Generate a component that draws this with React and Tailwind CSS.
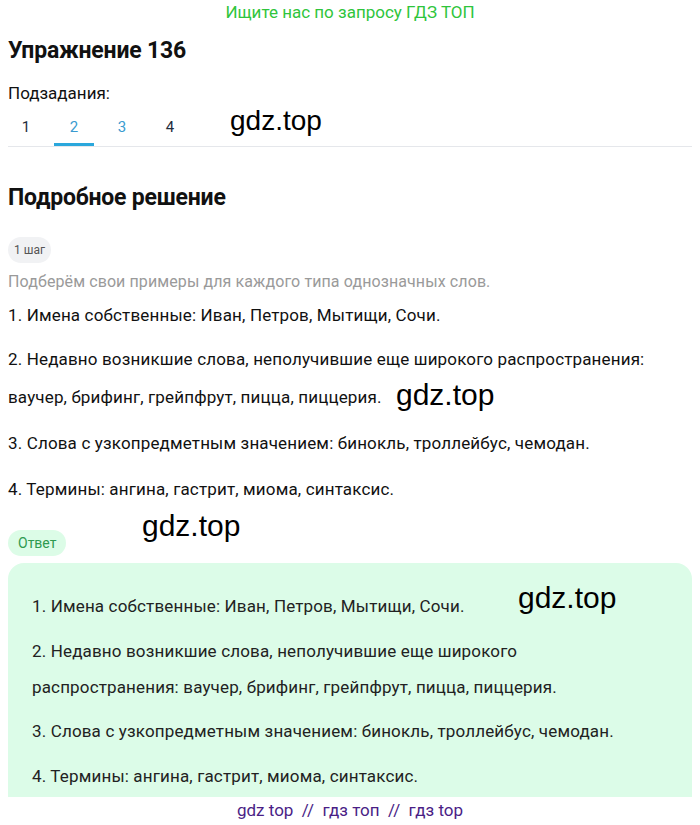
export default function App() {
  const font = { fontFamily: 'Roboto, "Noto Sans", sans-serif' };
  const arial = { fontFamily: '"Liberation Sans", Arial, sans-serif' };
  return (
    <div className="w-[700px] bg-white text-[#111] relative" style={font}>
      <div className="text-center text-[17px] leading-[24px] text-[#2fc53c]">Ищите нас по запросу ГДЗ ТОП</div>
      <div className="px-2">
        <h1 className="text-[23px] font-bold leading-[28px] mt-[13px] tracking-[-0.2px]">Упражнение 136</h1>
        <div className="text-[17px] mt-[17px] leading-[22px]">Подзадания:</div>
        <div className="relative flex border-b border-[#e5e7eb] mt-[4px]">
          {["1", "2", "3", "4"].map((t, i) => (
            <div
              key={t}
              className={
                "w-[40px] mr-[8px] h-[38px] flex items-center justify-center text-[15px] " +
                (i === 0 ? "ml-[-2px] " : "") +
                (i === 1 ? "text-[#3a9bd0] border-b-[3px] border-[#2aa7dc] pt-[3px]" : i === 2 ? "text-[#3a9bd0]" : "text-[#1f2d3d]")
              }
            >
              {t}
            </div>
          ))}
          <div className="absolute left-[222px] top-[-4px] text-[28px] leading-[34px] text-black" style={arial}>gdz.top</div>
        </div>
        <h2 className="text-[23px] font-bold leading-[28px] mt-[37px] tracking-[-0.2px]">Подробное решение</h2>
        <div className="mt-[25px] inline-flex items-center h-[26px] px-[6px] rounded-full bg-[#f1f2f4] text-[12px] text-[#555]">1 шаг</div>
        <p className="mt-[5px] text-[16px] leading-[28px] text-[#9a9a9a] tracking-[0.1px]">Подберём свои примеры для каждого типа однозначных слов.</p>
        <div className="text-[17px] leading-[36px] mt-[1px] tracking-[0.15px]">
          <p className="mb-[8px]">1. Имена собственные: Иван, Петров, Мытищи, Сочи.</p>
          <p className="mb-[10px]">
            2. Недавно возникшие слова, неполучившие еще широкого распространения: ваучер, брифинг, грейпфрут, пицца, пиццерия.{" "}
            <span className="ml-[10px] text-[30px] text-black align-[-2px] tracking-normal" style={arial}>gdz.top</span>
          </p>
          <p className="mb-[10px]">3. Слова с узкопредметным значением: бинокль, троллейбус, чемодан.</p>
          <p>4. Термины: ангина, гастрит, миома, синтаксис.</p>
        </div>
        <div className="relative mt-[23px]">
          <div className="inline-flex items-center h-[26px] px-[10px] rounded-full bg-[#dcfce7] text-[14px] text-[#2f9a4f]">Ответ</div>
          <div className="absolute left-[134px] top-[-22px] text-[30px] leading-[36px] text-black" style={arial}>gdz.top</div>
        </div>
        <div className="relative mt-[7px] bg-[#dcfce8] rounded-t-[16px] px-[24px] pt-[25px] h-[234px] overflow-hidden">
          <div className="text-[17px] leading-[36px] text-[#222] tracking-[0.15px]">
            <p className="mb-[9px]">1. Имена собственные: Иван, Петров, Мытищи, Сочи.</p>
            <p className="mb-[8px]">2. Недавно возникшие слова, неполучившие еще широкого распространения: ваучер, брифинг, грейпфрут, пицца, пиццерия.</p>
            <p className="mb-[9px]">3. Слова с узкопредметным значением: бинокль, троллейбус, чемодан.</p>
            <p>4. Термины: ангина, гастрит, миома, синтаксис.</p>
          </div>
          <div className="absolute left-[510px] top-[17px] text-[30px] leading-[36px] text-black" style={arial}>gdz.top</div>
        </div>
      </div>
      <div className="text-center text-[17px] leading-[26px] text-[#4a1e86]">gdz top &nbsp;//&nbsp; гдз топ &nbsp;//&nbsp; гдз top</div>
    </div>
  );
}
